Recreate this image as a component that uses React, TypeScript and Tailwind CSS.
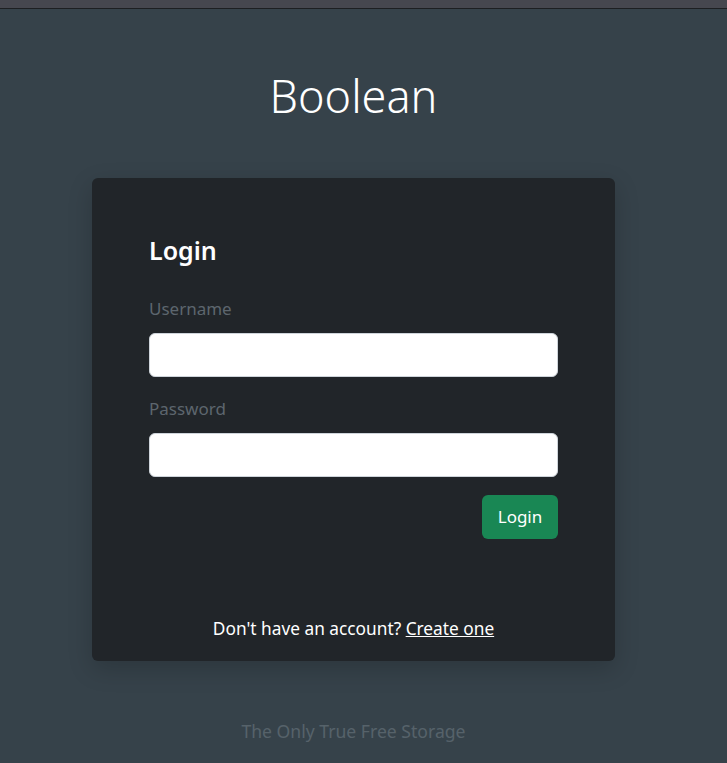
export default function App() {
  return (
    <div className="min-h-[763px] bg-[#36424a] font-['Noto_Sans',sans-serif]">
      {/* clipped browser strip at the top */}
      <div className="h-[9px] bg-[#46474f] border-b border-[#1d1f22]" />

      <div className="w-[707px] flex flex-col">
        <h1 className="mt-[61px] text-center text-[45px] leading-[52px] font-light text-white">Boolean</h1>

        <div className="mt-[56px] mx-auto w-[523px] h-[483px] rounded-md bg-[#212529] shadow-[0_8px_24px_rgba(0,0,0,0.18)] px-[57px] pt-[56px] pb-[19px] flex flex-col">
          <h2 className="text-[25px] leading-8 font-semibold text-white">Login</h2>

          <label className="mt-[31px] text-[17px] leading-6 text-[#5d666e]">Username</label>
          <input className="mt-[12px] h-[44px] w-full rounded-md bg-white border border-[#ced4da] outline-none" />

          <label className="mt-[20px] text-[17px] leading-6 text-[#5d666e]">Password</label>
          <input type="password" className="mt-[12px] h-[44px] w-full rounded-md bg-white border border-[#ced4da] outline-none" />

          <div className="mt-[18px] flex justify-end">
            <button className="h-[44px] w-[76px] rounded-md bg-[#198754] text-[17px] text-white">Login</button>
          </div>

          <p className="mt-auto text-center text-[17.3px] text-white">
            Don't have an account? <a href="#" className="underline">Create one</a>
          </p>
        </div>

        <p className="mt-[57px] text-center text-[17.6px] text-[#56626a]">The Only True Free Storage</p>
      </div>
    </div>
  );
}
